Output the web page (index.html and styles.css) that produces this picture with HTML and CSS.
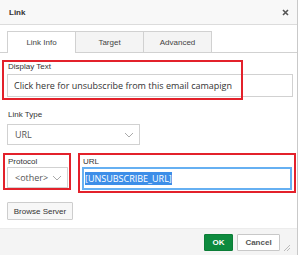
FILE: index.html
```html
<!DOCTYPE html>
<html lang="en">
<head>
  <meta charset="UTF-8" />
  <title>Link</title>
  <link rel="stylesheet" href="styles.css">
</head>
<body>
  <div class="dialog">
    <div class="titlebar">
      <h1>Link</h1>
      <svg class="close" width="7" height="7" viewBox="0 0 7 7"><path d="M1 1L6 6M6 1L1 6" stroke="#555" stroke-width="1.6"/></svg>
    </div>

    <div class="tabs">
      <div class="tab active">Link Info</div>
      <div class="tab">Target</div>
      <div class="tab">Advanced</div>
    </div>

    <div class="content">
      <label class="label">Display Text</label>
      <div class="input display-input">Click here for unsubscribe from this email camapign</div>

      <label class="label type-label">Link Type</label>
      <div class="select type-select">
        <span>URL</span>
        <svg width="10" height="6" viewBox="0 0 10 6"><polyline points="1,1 5,5 9,1" fill="none" stroke="#aaa" stroke-width="1"/></svg>
      </div>

      <div class="row">
        <div class="protocol">
          <label class="label">Protocol</label>
          <div class="select protocol-select">
            <span>&lt;other&gt;</span>
            <svg width="10" height="6" viewBox="0 0 10 6"><polyline points="1,1 5,5 9,1" fill="none" stroke="#aaa" stroke-width="1"/></svg>
          </div>
        </div>
        <div class="url">
          <label class="label">URL</label>
          <div class="input url-input"><span class="selected">[UNSUBSCRIBE_URL]</span></div>
        </div>
      </div>

      <button class="browse-btn">Browse Server</button>
    </div>

    <div class="footer">
      <button class="ok-btn">OK</button>
      <button class="cancel-btn">Cancel</button>
      <svg class="grip" width="6" height="6" viewBox="0 0 6 6"><path d="M6 0L0 6M6 3L3 6" stroke="#bbb" stroke-width="1"/></svg>
    </div>

    <!-- red annotation boxes -->
    <div class="mark mark-display"></div>
    <div class="mark mark-protocol"></div>
    <div class="mark mark-url"></div>
  </div>
</body>
</html>
```

FILE: styles.css
```css
body {
  margin: 0;
  background: #fff;
  font-family: "Liberation Sans", Arial, sans-serif;
  font-size: 8px;
  color: #333;
}
.dialog {
  position: relative;
  width: 297px;
  height: 255px;
  border-right: 1px solid #c9c9c9;
  display: flex;
  flex-direction: column;
}
.titlebar {
  height: 24px;
  background: #f8f8f8;
  border-bottom: 1px solid #dcdcdc;
  display: flex;
  align-items: center;
  justify-content: space-between;
  padding: 0 8px 0 9px;
}
.titlebar h1 {
  margin: 0;
  font-size: 8px;
  font-weight: bold;
  color: #333;
}
.tabs {
  display: flex;
  padding: 6px 0 0 7px;
  border-bottom: 1px solid #d1d1d1;
}
.tab {
  width: 67px;
  height: 20px;
  border: 1px solid #d1d1d1;
  border-bottom: none;
  background: #f4f4f4;
  margin-right: -1px;
  display: flex;
  align-items: center;
  justify-content: center;
  color: #444;
}
.tab.active {
  background: #fff;
  height: 21px;
  margin-bottom: -1px;
}
.content {
  padding: 9px 4px 0 7px;
}
.label {
  display: block;
  line-height: 10px;
  margin-left: 1px;
  color: #333;
}
.input,
.select {
  box-sizing: border-box;
  border: 1px solid #d1d1d1;
  display: flex;
  align-items: center;
  font-family: "Open Sans", sans-serif;
  font-size: 9px;
  color: #333;
}
.display-input {
  height: 23px;
  margin-top: 2px;
  padding-left: 6px;
}
.type-label {
  margin-top: 13px;
}
.select {
  height: 21px;
  justify-content: space-between;
  padding: 0 5px 0 7px;
  color: #555;
}
.type-select {
  width: 133px;
  margin-top: 4px;
}
.row {
  display: flex;
  gap: 14px;
  margin-top: 12px;
}
.protocol-select {
  width: 61px;
}
.url {
  flex: 1;
  padding-right: 1px;
}
.url-input {
  height: 23px;
  border: 2px solid #66b0f2;
  padding-left: 1px;
}
.selected {
  background: #3d8ee8;
  color: #fff;
  line-height: 13px;
}
.browse-btn {
  display: block;
  width: 66px;
  height: 18px;
  margin-top: 12px;
  padding: 0;
  background: #f7f7f7;
  border: 1px solid #cdcdcd;
  border-radius: 1px;
  font-family: "Liberation Sans", Arial, sans-serif;
  font-size: 8px;
  color: #333;
}
.footer {
  margin-top: auto;
  height: 27px;
  box-sizing: border-box;
  background: #f4f4f4;
  border-top: 1px solid #ececec;
  display: flex;
  align-items: center;
  justify-content: flex-end;
  gap: 4px;
  padding-right: 7px;
}
.footer button {
  height: 17px;
  padding: 0;
  font-family: "Liberation Sans", Arial, sans-serif;
  font-size: 8px;
  font-weight: bold;
  border-radius: 1px;
}
.ok-btn {
  width: 29px;
  background: #0d8a3e;
  border: 1px solid #0b7d37;
  color: #fff;
}
.cancel-btn {
  width: 43px;
  background: #fff;
  border: 1px solid #c8c8c8;
  color: #555;
}
.grip {
  align-self: flex-end;
  margin: 0 0 4px 0;
}
.mark {
  position: absolute;
  border: 2px solid #e3212b;
}
.mark-display {
  left: 2px;
  top: 60px;
  width: 237px;
  height: 36px;
}
.mark-protocol {
  left: 3px;
  top: 153px;
  width: 64px;
  height: 33px;
}
.mark-url {
  left: 78px;
  top: 153px;
  width: 214px;
  height: 36px;
}
```
